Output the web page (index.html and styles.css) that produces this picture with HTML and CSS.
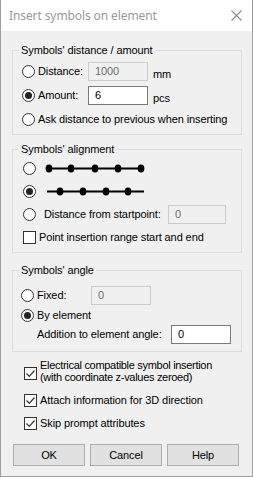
FILE: index.html
```html
<!DOCTYPE html>
<html>
<head>
<meta charset="utf-8">
<link rel="stylesheet" href="styles.css">
</head>
<body>
<div class="window">
  <div class="titlebar">
    <span class="title">Insert symbols on element</span>
    <svg class="close" width="11" height="11" viewBox="0 0 11 11"><path d="M0.5 0.5 L10.5 10.5 M10.5 0.5 L0.5 10.5" stroke="#8a8a8a" stroke-width="1.1" fill="none"/></svg>
  </div>
  <div class="content">
    <fieldset class="group g1">
      <legend>Symbols' distance / amount</legend>
      <div class="row r-in pl9">
        <span class="radio"></span><span class="lbl w50">Distance:</span><span class="field dis w60">1000</span><span class="unit">mm</span>
      </div>
      <div class="row r-in pl9 mt5">
        <span class="radio on"></span><span class="lbl w50">Amount:</span><span class="field w60">6</span><span class="unit">pcs</span>
      </div>
      <div class="row r-tx pl9 mt7">
        <span class="radio"></span><span class="lbl">Ask distance to previous when inserting</span>
      </div>
    </fieldset>

    <fieldset class="group g2">
      <legend>Symbols' alignment</legend>
      <div class="row r-tx pl10">
        <span class="radio"></span>
        <svg class="dots d1" width="101" height="9" viewBox="0 0 101 9"><path d="M4 4.5 H96" stroke="#000" stroke-width="2"/><ellipse cx="4" cy="4.5" rx="3.4" ry="4"/><ellipse cx="26" cy="4.5" rx="3.4" ry="4"/><ellipse cx="50" cy="4.5" rx="3.4" ry="4"/><ellipse cx="73" cy="4.5" rx="3.4" ry="4"/><ellipse cx="96" cy="4.5" rx="3.4" ry="4"/></svg>
      </div>
      <div class="row r-tx pl10 mt8">
        <span class="radio on"></span>
        <svg class="dots d2" width="99" height="9" viewBox="0 0 99 9"><path d="M1 4.5 H98" stroke="#000" stroke-width="2"/><ellipse cx="14" cy="4.5" rx="3.4" ry="4"/><ellipse cx="37" cy="4.5" rx="3.4" ry="4"/><ellipse cx="60" cy="4.5" rx="3.4" ry="4"/><ellipse cx="82" cy="4.5" rx="3.4" ry="4"/></svg>
      </div>
      <div class="row r-in pl10 mt6">
        <span class="radio"></span><span class="lbl gap7 w124">Distance from startpoint:</span><span class="field dis w58">0</span>
      </div>
      <div class="row r-tx pl10 mt6">
        <span class="check"></span><span class="lbl gap3">Point insertion range start and end</span>
      </div>
    </fieldset>

    <fieldset class="group g3">
      <legend>Symbols' angle</legend>
      <div class="row r-in pl8">
        <span class="radio"></span><span class="lbl w54">Fixed:</span><span class="field dis w60">0</span>
      </div>
      <div class="row r-tx pl8 mt3">
        <span class="radio on"></span><span class="lbl">By element</span>
      </div>
      <div class="row r-in pl24 mt2">
        <span class="lbl nogap w134">Addition to element angle:</span><span class="field w60">0</span>
      </div>
    </fieldset>

    <div class="crow c1">
      <span class="check on"><svg width="11" height="11" viewBox="0 0 11 11"><path d="M1.5 5.5 L4.3 8.3 L9.5 2.5" stroke="#333" stroke-width="1.2" fill="none"/></svg></span>
      <span class="clbl">Electrical compatible symbol insertion<br>(with coordinate z-values zeroed)</span>
    </div>
    <div class="crow c2">
      <span class="check on"><svg width="11" height="11" viewBox="0 0 11 11"><path d="M1.5 5.5 L4.3 8.3 L9.5 2.5" stroke="#333" stroke-width="1.2" fill="none"/></svg></span>
      <span class="clbl">Attach information for 3D direction</span>
    </div>
    <div class="crow c3">
      <span class="check on"><svg width="11" height="11" viewBox="0 0 11 11"><path d="M1.5 5.5 L4.3 8.3 L9.5 2.5" stroke="#333" stroke-width="1.2" fill="none"/></svg></span>
      <span class="clbl">Skip prompt attributes</span>
    </div>

    <div class="buttons">
      <div class="btn">OK</div>
      <div class="btn">Cancel</div>
      <div class="btn">Help</div>
    </div>
  </div>
</div>
</body>
</html>
```
FILE: styles.css
```css
html, body {
  margin: 0;
  padding: 0;
  background: #ffffff;
}

.window {
  width: 253px;
  height: 477px;
  box-sizing: border-box;
  border: 1px solid #a0a0a0;
  border-top: none;
  background: #f0f0f0;
  font-family: "Liberation Sans", Arial, sans-serif;
  font-size: 11px;
  letter-spacing: -0.1px;
  color: #000;
  overflow: hidden;
}

.titlebar {
  height: 31px;
  background: #ffffff;
  display: flex;
  align-items: center;
  justify-content: space-between;
  padding: 0 10px 0 8px;
}

.title {
  font-family: "Noto Sans", sans-serif;
  font-size: 12px;
  letter-spacing: -0.1px;
  color: #999999;
}

.close {
  display: block;
}

.content {
  padding: 13px 0 0 11px;
}

.group {
  margin: 0;
  padding: 0 0 7px 0;
  border: 1px solid #dcdcdc;
  width: 230px;
  min-width: 0;
  box-sizing: border-box;
}

.group legend {
  padding: 0 2px;
  margin-left: 6px;
  line-height: 13px;
}

.g1 { padding-top: 5px; }
.g2 { margin-top: 8px; padding-top: 5px; }
.g3 { margin-top: 11px; padding-top: 9px; }

.row {
  display: flex;
  align-items: center;
}

.r-in { height: 19px; }
.r-tx { height: 15px; }

.pl8 { padding-left: 8px; }
.pl9 { padding-left: 9px; }
.pl10 { padding-left: 10px; }
.pl24 { padding-left: 24px; }
.mt2 { margin-top: 2px; }
.mt3 { margin-top: 3px; }
.mt5 { margin-top: 5px; }
.mt6 { margin-top: 6px; }
.mt7 { margin-top: 7px; }
.mt8 { margin-top: 8px; }

.radio {
  flex: none;
  width: 13px;
  height: 13px;
  box-sizing: border-box;
  border: 1px solid #333;
  border-radius: 50%;
  background: #fff;
  position: relative;
}

.radio.on::after {
  content: "";
  position: absolute;
  left: 2px;
  top: 2px;
  width: 7px;
  height: 7px;
  border-radius: 50%;
  background: #222;
}

.check {
  flex: none;
  width: 13px;
  height: 13px;
  box-sizing: border-box;
  border: 1px solid #333;
  background: #fff;
  display: flex;
  align-items: center;
  justify-content: center;
}

.check svg { display: block; }

.lbl {
  flex: none;
  margin-left: 3px;
  line-height: 15px;
  white-space: nowrap;
}

.lbl.gap7 { margin-left: 8px; }
.lbl.gap3 { margin-left: 3px; }
.lbl.nogap { margin-left: 0; }

.w50 { width: 50px; }
.w54 { width: 54px; }
.w124 { width: 124px; }
.w134 { width: 134px; }

.field {
  flex: none;
  height: 19px;
  box-sizing: border-box;
  border: 1px solid #7a7a7a;
  background: #fff;
  padding-left: 6px;
  line-height: 17px;
  color: #000;
}

.field.dis {
  border-color: #cccccc;
  background: #f0f0f0;
  color: #6d6d6d;
}

.w58 { width: 58px; }
.w60 { width: 60px; }

.unit {
  margin-left: 5px;
  padding-top: 5px;
}

.dots { display: block; flex: none; }
.d1 { margin-left: 9px; }
.d2 { margin-left: 10px; }

.crow {
  display: flex;
  align-items: flex-start;
  padding-left: 12px;
}

.crow .check { margin-top: 1px; }

.clbl {
  margin-left: 3px;
  line-height: 15px;
  white-space: nowrap;
}

.c1 { margin-top: 7px; }
.c1 .clbl { line-height: 12px; letter-spacing: -0.3px; }
.c1 .check { margin-top: 8px; }
.c2 { margin-top: 10px; }
.c3 { margin-top: 8px; }

.buttons {
  display: flex;
  gap: 5px;
  margin-top: 13px;
  padding-left: 1px;
}

.btn {
  width: 72px;
  height: 22px;
  box-sizing: border-box;
  border: 1px solid #adadad;
  background: #e1e1e1;
  display: flex;
  align-items: center;
  justify-content: center;
}
```
